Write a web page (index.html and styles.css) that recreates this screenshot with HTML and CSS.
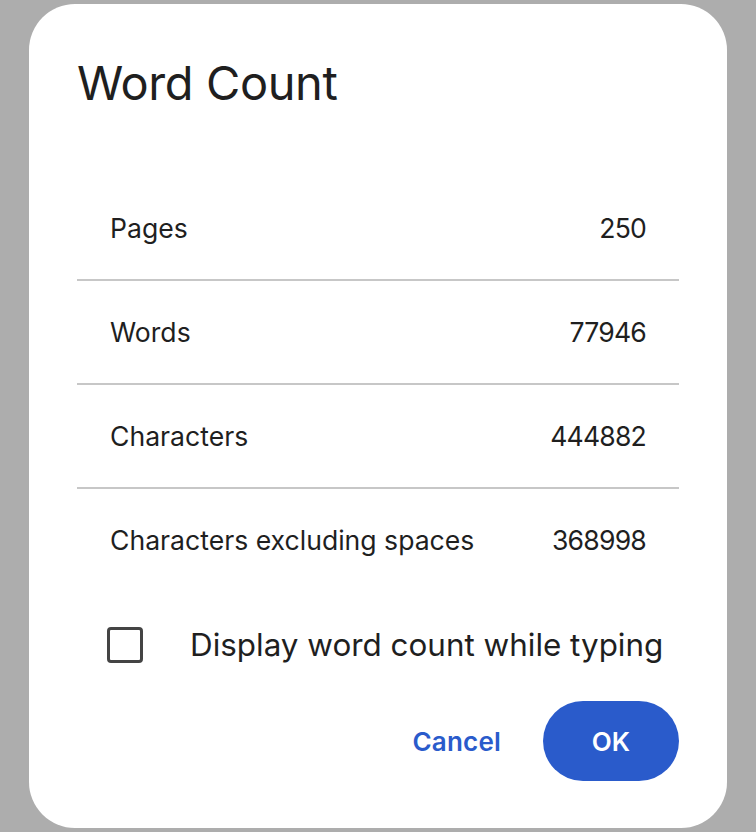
FILE: index.html
```html
<!DOCTYPE html>
<html lang="en">
<head>
<meta charset="UTF-8">
<meta name="viewport" content="width=device-width, initial-scale=1.0">
<title>Word Count</title>
<link rel="stylesheet" href="styles.css">
</head>
<body>
<div class="dialog">
    <h1 class="title">Word Count</h1>
    <div class="stats">
        <div class="row"><span>Pages</span><span class="value">250</span></div>
        <div class="row"><span>Words</span><span class="value">77946</span></div>
        <div class="row"><span>Characters</span><span class="value">444882</span></div>
        <div class="row"><span>Characters excluding spaces</span><span class="value">368998</span></div>
    </div>
    <label class="option">
        <span class="checkbox"></span>
        <span>Display word count while typing</span>
    </label>
    <div class="actions">
        <button class="btn-text">Cancel</button>
        <button class="btn-filled">OK</button>
    </div>
</div>
</body>
</html>
```
FILE: styles.css
```css
body {
    margin: 0;
    background-color: #adadad;
    font-family: Inter, "Noto Sans", sans-serif;
    color: #1f1f1f;
    overflow: hidden;
}
.dialog {
    width: 698px;
    height: 824px;
    margin: 4px 0 0 29px;
    padding: 0 48px;
    box-sizing: border-box;
    background-color: #fff;
    border-radius: 46px;
}
.title {
    margin: 0;
    padding-top: 51px;
    font-size: 47px;
    font-weight: 400;
    line-height: 56px;
    letter-spacing: -0.4px;
}
.stats {
    margin-top: 66px;
}
.row {
    display: flex;
    justify-content: space-between;
    align-items: center;
    height: 102px;
    padding: 0 33px;
    font-size: 26.6px;
    border-bottom: 2px solid #c7c7c7;
}
.row:last-child {
    border-bottom: none;
}
.value {
    letter-spacing: -0.8px;
}
.option {
    display: flex;
    align-items: center;
    gap: 47px;
    margin-top: 32px;
    padding-left: 30px;
    font-size: 31.4px;
    height: 44px;
}
.checkbox {
    width: 30px;
    height: 30px;
    border: 3px solid #444;
    border-radius: 4px;
}
.actions {
    display: flex;
    justify-content: flex-end;
    align-items: center;
    gap: 42px;
    margin-top: 34px;
}
.btn-text, .btn-filled {
    font-family: inherit;
    font-size: 26px;
    font-weight: 600;
    border: none;
    cursor: pointer;
}
.btn-text {
    background: none;
    color: #2a5bcb;
    padding: 0;
    letter-spacing: 0.2px;
}
.btn-filled {
    width: 136px;
    height: 80px;
    border-radius: 40px;
    background-color: #2a5bcb;
    color: #fff;
}
```
